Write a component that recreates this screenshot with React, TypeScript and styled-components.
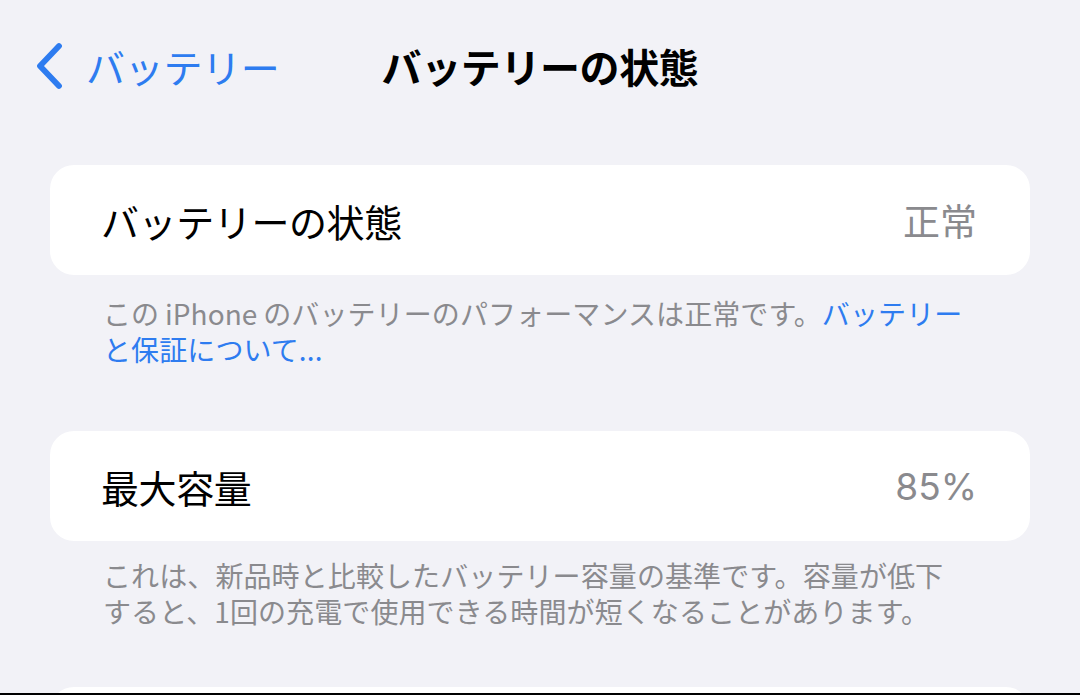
import React from "react";
import styled, { createGlobalStyle } from "styled-components";

const Global = createGlobalStyle`
  html, body {
    margin: 0;
    padding: 0;
    background: #f2f2f7;
  }
  body {
    font-family: "Noto Sans CJK JP", "Noto Sans", sans-serif;
    -webkit-font-smoothing: antialiased;
  }
`;

const Page = styled.div`
  width: 1080px;
  height: 695px;
  overflow: hidden;
  background: #f2f2f7;
  display: flex;
  flex-direction: column;
  position: relative;
`;

const Header = styled.header`
  flex-shrink: 0;
  height: 132px;
  display: grid;
  grid-template-columns: 1fr auto 1fr;
  align-items: center;
  padding: 0 35px;
  box-sizing: border-box;
`;

const BackButton = styled.div`
  display: flex;
  align-items: center;
  gap: 23px;
  color: #2e7cf0;
  font-size: 39px;
  font-weight: 400;
  letter-spacing: -0.3px;
  justify-self: start;
  line-height: 1;
`;

const Title = styled.h1`
  margin: 0;
  font-size: 40px;
  font-weight: 700;
  color: #000;
  letter-spacing: -0.4px;
  line-height: 1;
`;

const Content = styled.main`
  flex-shrink: 0;
  display: flex;
  flex-direction: column;
  padding: 33px 50px 0;
`;

const Section = styled.section<{ $after: number }>`
  display: flex;
  flex-direction: column;
  margin-bottom: ${(p) => p.$after}px;
`;

const Card = styled.div`
  background: #ffffff;
  border-radius: 24px;
  height: 110px;
  display: flex;
  align-items: center;
  justify-content: space-between;
  padding: 0 53px 0 51px;
  box-sizing: border-box;
`;

const Label = styled.span`
  font-size: 38px;
  color: #000;
  letter-spacing: -0.4px;
`;

const Value = styled.span`
  font-family: Inter, "Noto Sans CJK JP", sans-serif;
  font-size: 37px;
  color: #8a8a8e;
`;

const Footer = styled.p<{ $top: number }>`
  margin: ${(p) => p.$top}px 0 0;
  padding: 0 62px 0 53px;
  font-size: 28px;
  line-height: 36px;
  color: #8a8a8e;
  letter-spacing: 0.1px;
`;

const Link = styled.span`
  color: #2e7cf0;
`;

const PeekCard = styled.div`
  background: #ffffff;
  border-radius: 24px 24px 0 0;
  height: 40px;
`;

const BottomEdge = styled.div`
  position: absolute;
  left: 0;
  right: 0;
  bottom: 0;
  height: 2px;
  background: #000;
`;

const Chevron = () => (
  <svg width="28" height="48" viewBox="0 0 28 48" fill="none">
    <path
      d="M24 4 L5 24 L24 44"
      stroke="#2e7cf0"
      strokeWidth="5.8"
      strokeLinecap="round"
      strokeLinejoin="round"
    />
  </svg>
);

export default function App() {
  return (
    <>
      <Global />
      <Page>
        <Header>
          <BackButton>
            <Chevron />
            <span>バッテリー</span>
          </BackButton>
          <Title>バッテリーの状態</Title>
          <div />
        </Header>
        <Content>
          <Section $after={64}>
            <Card>
              <Label>バッテリーの状態</Label>
              <Value>正常</Value>
            </Card>
            <Footer $top={20}>
              この{"\u2009"}iPhone{"\u2009"}のバッテリーのパフォーマンスは正常です。<Link>バッテリーと保証について...</Link>
            </Footer>
          </Section>
          <Section $after={58}>
            <Card>
              <Label>最大容量</Label>
              <Value>85%</Value>
            </Card>
            <Footer $top={16}>
              これは、新品時と比較したバッテリー容量の基準です。容量が低下すると、1回の充電で使用できる時間が短くなることがあります。
            </Footer>
          </Section>
          <PeekCard />
        </Content>
        <BottomEdge />
      </Page>
    </>
  );
}
